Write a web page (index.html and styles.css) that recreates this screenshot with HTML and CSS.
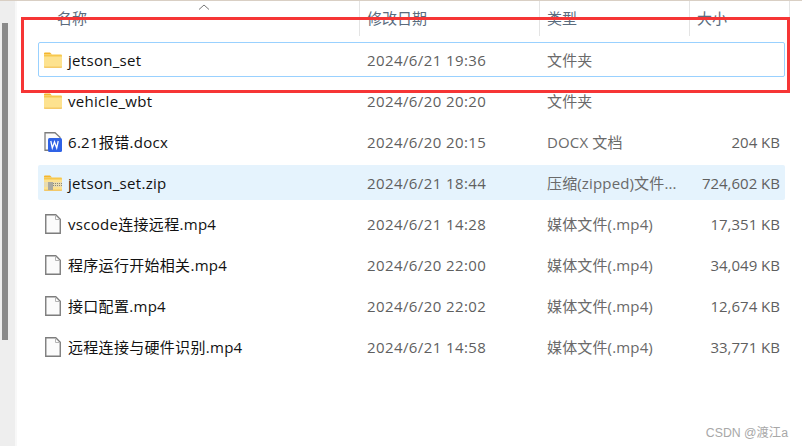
FILE: index.html
```html
<!DOCTYPE html>
<html lang="zh-CN">
<head>
    <meta charset="UTF-8">
    <meta name="viewport" content="width=device-width, initial-scale=1.0">
    <title>jetson_set</title>
    <link rel="stylesheet" href="styles.css">
</head>
<body>
    <svg class="defs" width="0" height="0">
        <symbol id="folder" viewBox="0 0 18 16">
            <path d="M0 1.500a1 1 0 0 1 1-1h5l2 2h-8z" fill="#f5b62c"/>
            <path d="M0 2.500h17a1 1 0 0 1 1 1v11a1 1 0 0 1-1 1H1a1 1 0 0 1-1-1z" fill="#f7c84d"/>
            <path d="M0 4.500h18v10a1 1 0 0 1-1 1H1a1 1 0 0 1-1-1z" fill="#fde28f"/>
            <path d="M0 14.700h18v.3a.8.8 0 0 1-1 .5H1a.8.8 0 0 1-1-.5z" fill="#eeb23a"/>
        </symbol>
        <symbol id="page" viewBox="0 0 16 20">
            <path d="M.75.75h10l4.500 4.500v14h-14.500z" fill="#fbfbfb" stroke="#7d7d7d" stroke-width="1.400"/>
            <path d="M10.500 1v4.500h4.500" fill="none" stroke="#b4b4b4"/>
        </symbol>
    </svg>

    <div class="window">
        <div class="scrollbar"><div class="thumb"></div></div>
        <div class="pane">
            <div class="header">
                <div class="col-name">名称<svg class="sort" width="12" height="6" viewBox="0 0 12 6"><path d="M1 5.500l5-4.500 5 4.500" fill="none" stroke="#777"/></svg></div>
                <div class="col-date">修改日期</div>
                <div class="col-type">类型</div>
                <div class="col-size">大小</div>
            </div>

            <div class="row row-focus">
                <svg class="icon" width="18" height="16"><use href="#folder"/></svg>
                <div class="name">jetson_set</div>
                <div class="date">2024/6/21 19:36</div>
                <div class="type">文件夹</div>
                <div class="size"></div>
            </div>
            <div class="row">
                <svg class="icon" width="18" height="16"><use href="#folder"/></svg>
                <div class="name">vehicle_wbt</div>
                <div class="date">2024/6/20 20:20</div>
                <div class="type">文件夹</div>
                <div class="size"></div>
            </div>
            <div class="row">
                <svg class="icon" width="18" height="20" viewBox="0 0 18 20">
                    <path d="M1 .75h10l5 4.500v13H1z" fill="#fbfbfb" stroke="#7d7d7d" stroke-width="1.300"/>
                    <rect x="4" y="6" width="14" height="14" rx="1.500" fill="#2f62e6"/>
                    <path d="M6.800 9l1.500 7 2.200-6 2.200 6 1.500-7" fill="none" stroke="#fff" stroke-width="1.300"/>
                </svg>
                <div class="name">6.21报错.docx</div>
                <div class="date">2024/6/20 20:15</div>
                <div class="type">DOCX 文档</div>
                <div class="size">204 KB</div>
            </div>
            <div class="row row-selected">
                <svg class="icon" width="18" height="16" viewBox="0 0 18 16">
                    <use href="#folder"/>
                    <rect x="0" y="7" width="18" height="5" fill="#e9dcb0"/>
                    <rect x="4" y="7" width="5" height="8" fill="#a9a9a0"/>
                    <path d="M9 8.500h9M9 10.500h9" stroke="#8d8a78" stroke-dasharray="1 1"/>
                </svg>
                <div class="name">jetson_set.zip</div>
                <div class="date">2024/6/21 18:44</div>
                <div class="type">压缩(zipped)文件...</div>
                <div class="size">724,602 KB</div>
            </div>
            <div class="row">
                <svg class="icon" width="16" height="20"><use href="#page"/></svg>
                <div class="name">vscode连接远程.mp4</div>
                <div class="date">2024/6/21 14:28</div>
                <div class="type">媒体文件(.mp4)</div>
                <div class="size">17,351 KB</div>
            </div>
            <div class="row">
                <svg class="icon" width="16" height="20"><use href="#page"/></svg>
                <div class="name">程序运行开始相关.mp4</div>
                <div class="date">2024/6/20 22:00</div>
                <div class="type">媒体文件(.mp4)</div>
                <div class="size">34,049 KB</div>
            </div>
            <div class="row">
                <svg class="icon" width="16" height="20"><use href="#page"/></svg>
                <div class="name">接口配置.mp4</div>
                <div class="date">2024/6/20 22:02</div>
                <div class="type">媒体文件(.mp4)</div>
                <div class="size">12,674 KB</div>
            </div>
            <div class="row">
                <svg class="icon" width="16" height="20"><use href="#page"/></svg>
                <div class="name">远程连接与硬件识别.mp4</div>
                <div class="date">2024/6/21 14:58</div>
                <div class="type">媒体文件(.mp4)</div>
                <div class="size">33,771 KB</div>
            </div>
        </div>
    </div>

    <div class="highlight"></div>
    <div class="watermark">CSDN @渡江a</div>
</body>
</html>
```

FILE: styles.css
```css
html, body {
    margin: 0;
    padding: 0;
}
body {
    width: 802px;
    height: 446px;
    overflow: hidden;
    position: relative;
    background-color: #fff;
    font-family: "Open Sans", "Noto Sans CJK SC", sans-serif;
    font-size: 15px;
    color: #1a1a1a;
}
.defs {
    position: absolute;
}
.window {
    display: flex;
    height: 445px;
    border-top: 1px solid #d9cfc4;
}
.scrollbar {
    width: 17px;
    padding: 22px 0 0 2px;
    box-sizing: border-box;
    background-color: #eeeeee;
    border-right: 2px solid #f8f8f8;
    flex: none;
}
.thumb {
    width: 6px;
    height: 317px;
    background-color: #8a8a8a;
}
.pane {
    flex: 1;
    padding: 0 0 0 21px;
}
.header {
    display: grid;
    grid-template-columns: 322px 180px 150px 100px;
    height: 33px;
    color: #5a6b7d;
    line-height: 35px;
}
.header > div {
    border-right: 1px solid #e4e4e4;
    padding-left: 7px;
    box-sizing: border-box;
    position: relative;
}
.col-name {
    padding-left: 19px !important;
}
.sort {
    position: absolute;
    left: 160px;
    top: 3px;
}
.row {
    display: flex;
    align-items: center;
    width: 747px;
    height: 35px;
    margin-bottom: 6px;
    box-sizing: border-box;
    border: 1px solid transparent;
    border-radius: 2px;
}
.header + .row {
    margin-top: 8px;
}
.row-focus {
    border-color: #99d1ff;
}
.row-selected {
    background-color: #e5f3fd;
}
.icon {
    flex: none;
    width: 18px;
    margin-left: 5px;
}
.name {
    width: 299px;
    margin-left: 6px;
    color: #111;
    letter-spacing: 0.300px;
}
.date {
    width: 180px;
    color: #5f5f5f;
    letter-spacing: 0.400px;
}
.type {
    width: 140px;
    color: #6a6a6a;
    letter-spacing: 0.150px;
    white-space: nowrap;
}
.size {
    width: 93px;
    text-align: right;
    color: #5f5f5f;
}
.highlight {
    position: absolute;
    left: 21px;
    top: 17px;
    width: 769px;
    height: 76px;
    box-sizing: border-box;
    border: 3px solid #f63535;
}
.watermark {
    position: absolute;
    right: 14px;
    top: 423px;
    font-family: "Liberation Sans", "Noto Sans CJK SC", sans-serif;
    font-size: 12.300px;
    color: #a8a8a8;
}
```
